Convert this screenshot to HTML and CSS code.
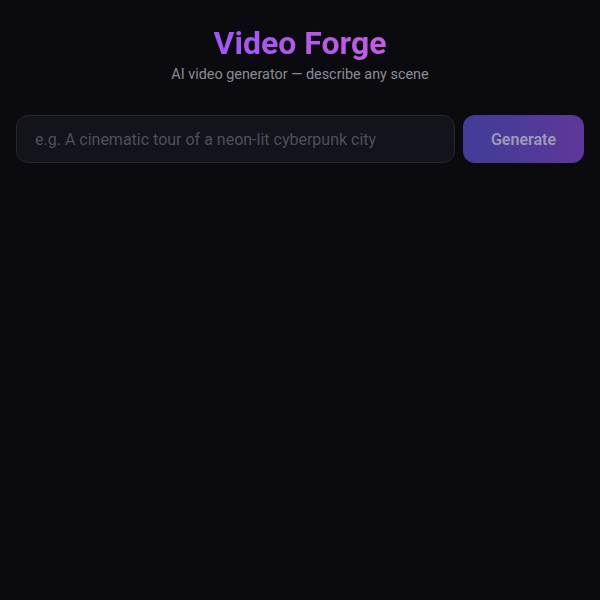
FILE: index.html
```html
<!DOCTYPE html>
<html>
<head>
<meta charset="utf-8">
<link rel="stylesheet" href="styles.css">
</head>
<body>
<main class="app">
  <header class="hero">
    <h1 class="title">Video Forge</h1>
    <p class="subtitle">AI video generator — describe any scene</p>
  </header>
  <form class="prompt">
    <input class="prompt-input" type="text" placeholder="e.g. A cinematic tour of a neon-lit cyberpunk city">
    <button class="generate" type="button" disabled>Generate</button>
  </form>
</main>
</body>
</html>
```
FILE: styles.css
```css
* { box-sizing: border-box; }
html, body { margin: 0; height: 100%; }
body {
  background: #0b0b0f;
  font-family: Roboto, "Liberation Sans", sans-serif;
  color: #e5e7eb;
}
.app {
  padding: 24px 16px;
  display: flex;
  flex-direction: column;
  gap: 30px;
}
.hero {
  display: flex;
  flex-direction: column;
  align-items: center;
  gap: 3px;
}
.title {
  margin: 0;
  font-size: 32px;
  font-weight: 700;
  line-height: 38px;
  background: linear-gradient(90deg, #a056f4, #c25de2);
  -webkit-background-clip: text;
  background-clip: text;
  color: transparent;
}
.subtitle {
  margin: 0;
  font-size: 14.4px;
  line-height: 20px;
  color: #8b8b96;
}
.prompt {
  display: flex;
  gap: 8px;
  margin: 0;
}
.prompt-input {
  flex: 1;
  height: 48px;
  padding: 0 18px;
  border-radius: 12px;
  border: 1px solid #262631;
  background: #13131b;
  color: #e5e7eb;
  font-family: inherit;
  font-size: 16px;
  outline: none;
}
.prompt-input::placeholder { color: #4f4f5b; }
.generate {
  width: 121px;
  height: 48px;
  border: none;
  border-radius: 12px;
  background: linear-gradient(90deg, #403d98, #5e3799);
  color: #9e9bb6;
  font-family: inherit;
  font-size: 16px;
  font-weight: 600;
}
```
